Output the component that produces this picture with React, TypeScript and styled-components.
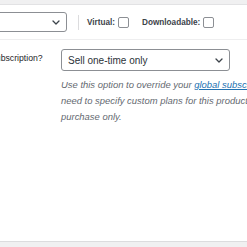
import styled, { createGlobalStyle } from "styled-components";

const GlobalStyle = createGlobalStyle`
  html, body {
    margin: 0;
    padding: 0;
    background: #f0f0f1;
    overflow: hidden;
    font-family: "Liberation Sans", Arial, sans-serif;
  }
`;

function Chevron() {
  return (
    <svg width="8" height="5" viewBox="0 0 8 5" fill="none">
      <polyline
        points="1,1 4,4 7,1"
        stroke="#3c434a"
        strokeWidth="1.3"
        strokeLinecap="round"
        strokeLinejoin="round"
      />
    </svg>
  );
}

export default function App() {
  return (
    <>
      <GlobalStyle />
      <Panel>
        <Header>
          <Select $width={97} $height={20}>
            <span />
            <Chevron />
          </Select>
          <Divider />
          <Option>
            <OptionLabel>Virtual:</OptionLabel>
            <Checkbox />
          </Option>
          <Option>
            <OptionLabel>Downloadable:</OptionLabel>
            <Checkbox />
          </Option>
        </Header>
        <FieldRow>
          <FieldLabel>Subscription?</FieldLabel>
          <Field>
            <Select $width={169} $height={22}>
              <SelectText>Sell one-time only</SelectText>
              <Chevron />
            </Select>
            <Description>
              Use this option to override your{" "}
              <a href="#">global subscription settings</a>. You only
              <br />
              need to specify custom plans for this product if you want to
              offer it for one-time
              <br />
              purchase only.
            </Description>
          </Field>
        </FieldRow>
      </Panel>
    </>
  );
}

const Panel = styled.div`
  margin: 4px 0 0 -40px;
  width: 600px;
  height: 236px;
  background: #fff;
  border-top: 1px solid #e2e2e4;
  border-bottom: 1px solid #dcdcde;
`;

const Header = styled.div`
  height: 34px;
  display: flex;
  align-items: center;
  padding-left: 10px;
  border-bottom: 1px solid #eeeeef;
`;

const Select = styled.div<{ $width: number; $height: number }>`
  box-sizing: border-box;
  width: ${(p) => p.$width}px;
  height: ${(p) => p.$height}px;
  border: 1px solid #8c8f94;
  border-radius: 3px;
  background: #fff;
  display: flex;
  align-items: center;
  justify-content: space-between;
  padding: 0 6px 0 6px;
`;

const SelectText = styled.span`
  font-size: 10px;
  color: #2c3338;
`;

const Divider = styled.div`
  width: 1px;
  height: 15px;
  background: #dcdcde;
  margin: 0 8px 0 11px;
`;

const Option = styled.label`
  display: flex;
  align-items: center;
  gap: 3px;
  margin-right: 13px;
`;

const OptionLabel = styled.span`
  font-size: 8.2px;
  font-weight: bold;
  color: #3c434a;
`;

const Checkbox = styled.span`
  box-sizing: border-box;
  width: 11px;
  height: 11px;
  border: 1px solid #8c8f94;
  border-radius: 2px;
  background: #fff;
`;

const FieldRow = styled.div`
  display: flex;
  padding: 9px 0 0 30px;
`;

const FieldLabel = styled.div`
  width: 71px;
  flex-shrink: 0;
  font-size: 8.7px;
  color: #1d2327;
  padding-top: 4px;
`;

const Field = styled.div`
  display: flex;
  flex-direction: column;
`;

const Description = styled.p`
  margin: 6px 0 0;
  font-size: 9.45px;
  font-style: italic;
  line-height: 16px;
  color: #646970;
  white-space: nowrap;

  a {
    color: #2271b1;
    text-decoration: underline;
  }
`;
